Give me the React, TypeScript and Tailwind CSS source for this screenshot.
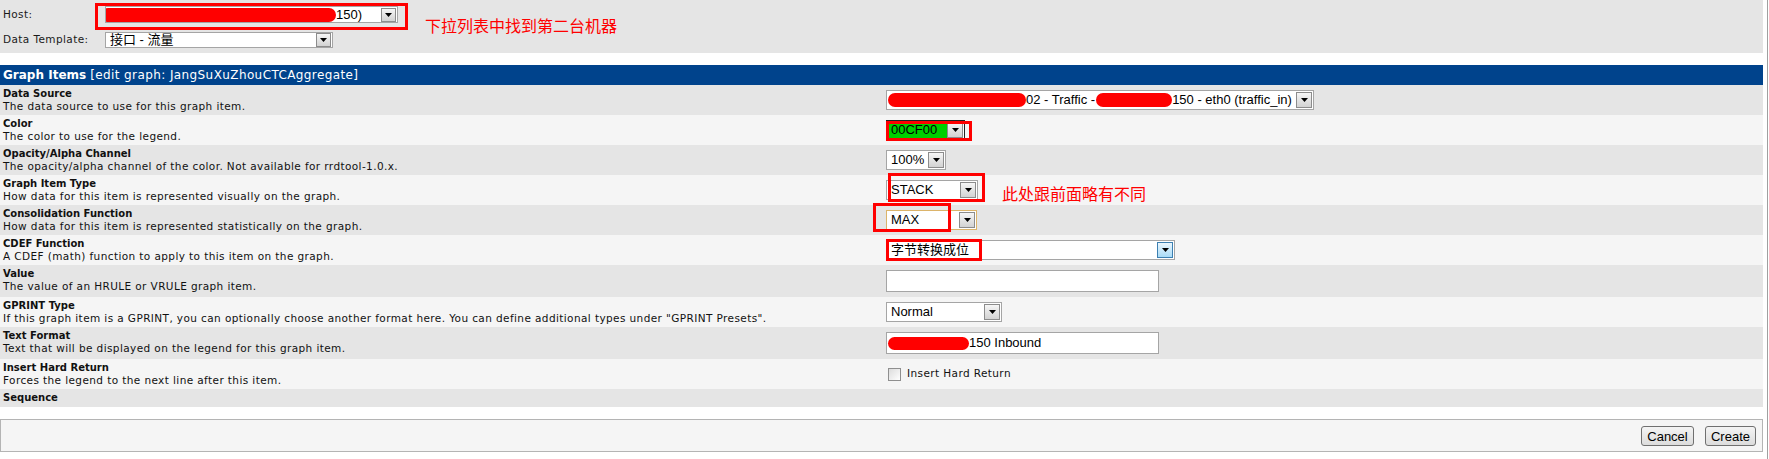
import type React from "react"

const verdana = "font-['DejaVu_Sans',Verdana,sans-serif]"
const arial = "font-['Liberation_Sans',Arial,'Noto_Sans_CJK_SC',sans-serif]"
const smallText = `${verdana} text-[10.5px] tracking-[0.4px]`

function Arrow({ blue = false, small = false }: { blue?: boolean; small?: boolean }) {
  return (
    <span
      className={`mr-[1px] flex shrink-0 items-center justify-center border ${small ? "h-[14px] w-[15px]" : "h-[16px] w-[16px]"} ${
        blue
          ? "border-[#3c7fb1] bg-linear-to-b from-[#eaf6fd] to-[#a9dbf6]"
          : "border-[#8c8c8c] bg-linear-to-b from-[#f6f6f6] to-[#d2d2d2]"
      }`}
    >
      <svg width="7" height="4" viewBox="0 0 7 4">
        <path d="M0 0h7L3.5 4z" fill="#000" />
      </svg>
    </span>
  )
}

interface SelectProps {
  size: string
  children: React.ReactNode
  border?: string
  bg?: string
  blue?: boolean
  small?: boolean
}

function Select({ size, children, border = "border-[#a5a5a5]", bg = "bg-white", blue, small }: SelectProps) {
  return (
    <div className={`flex items-center justify-between border ${border} bg-white ${size} ${arial} text-[13px] text-black`}>
      <div className={`flex h-full min-w-0 flex-1 items-center overflow-hidden whitespace-nowrap pl-[4px] ${bg}`}>{children}</div>
      <Arrow blue={blue} small={small} />
    </div>
  )
}

function Blob({ className }: { className: string }) {
  return <span className={`inline-block shrink-0 rounded-full bg-[#ff0000] ${className}`} />
}

interface Row {
  title: string
  desc?: string
  h: string
  control?: React.ReactNode
}

const rows: Row[] = [
  {
    title: "Data Source",
    desc: "The data source to use for this graph item.",
    h: "h-[30px]",
    control: (
      <Select size="w-[428px] h-[20px]">
        <Blob className="-ml-[3px] h-[14px] w-[138px]" />
        <span>02 - Traffic -</span>
        <Blob className="ml-[1px] h-[14px] w-[76px]" />
        <span>150 - eth0 (traffic_in)</span>
      </Select>
    ),
  },
  {
    title: "Color",
    desc: "The color to use for the legend.",
    h: "h-[30px]",
    control: (
      <Select size="w-[79px] h-[20px]" border="border-[#222]" bg="bg-[#00cf00]">
        00CF00
      </Select>
    ),
  },
  {
    title: "Opacity/Alpha Channel",
    desc: "The opacity/alpha channel of the color. Not available for rrdtool-1.0.x.",
    h: "h-[30px]",
    control: <Select size="w-[60px] h-[20px]">100%</Select>,
  },
  {
    title: "Graph Item Type",
    desc: "How data for this item is represented visually on the graph.",
    h: "h-[30px]",
    control: <Select size="w-[92px] h-[20px]">STACK</Select>,
  },
  {
    title: "Consolidation Function",
    desc: "How data for this item is represented statistically on the graph.",
    h: "h-[30px]",
    control: (
      <Select size="w-[91px] h-[20px]" border="border-[#dcb46a]">
        MAX
      </Select>
    ),
  },
  {
    title: "CDEF Function",
    desc: "A CDEF (math) function to apply to this item on the graph.",
    h: "h-[30px]",
    control: (
      <Select size="w-[289px] h-[20px]" blue>
        字节转换成位
      </Select>
    ),
  },
  {
    title: "Value",
    desc: "The value of an HRULE or VRULE graph item.",
    h: "h-[32px]",
    control: <div className="h-[22px] w-[273px] border border-[#a5a5a5] bg-white" />,
  },
  {
    title: "GPRINT Type",
    desc: 'If this graph item is a GPRINT, you can optionally choose another format here. You can define additional types under "GPRINT Presets".',
    h: "h-[30px]",
    control: <Select size="w-[116px] h-[20px]">Normal</Select>,
  },
  {
    title: "Text Format",
    desc: "Text that will be displayed on the legend for this graph item.",
    h: "h-[32px]",
    control: (
      <div className={`flex h-[22px] w-[273px] items-center overflow-hidden border border-[#a5a5a5] bg-white pl-[1px] ${arial} text-[13px] text-black`}>
        <Blob className="h-[13px] w-[81px]" />
        <span className="whitespace-nowrap">150 Inbound</span>
      </div>
    ),
  },
  {
    title: "Insert Hard Return",
    desc: "Forces the legend to the next line after this item.",
    h: "h-[30px]",
    control: (
      <label className={`flex items-center gap-[6px] pl-[2px] ${smallText} text-[#111]`}>
        <span className="h-[13px] w-[13px] border border-[#8f8f8f] bg-linear-to-br from-[#dcdcdc] to-white" />
        Insert Hard Return
      </label>
    ),
  },
  { title: "Sequence", h: "h-[18px]" },
]

export default function App() {
  return (
    <div className="relative flex h-[459px] w-[1769px] overflow-hidden bg-white">
      <div className="w-[1763px]">
        {/* host / template picker */}
        <div className={`h-[53px] bg-[#e5e5e5] pt-[6px] ${smallText} text-[#1a1a1a]`}>
          <div className="flex h-[17px] items-center">
            <span className="w-[105px] pl-[3px]">Host:</span>
            <Select size="w-[293px] h-[17px]" small>
              <Blob className="-ml-[9px] h-[14px] w-[235px]" />
              <span className="tracking-normal">150)</span>
            </Select>
          </div>
          <div className="mt-[9px] flex h-[16px] items-center">
            <span className="w-[105px] pl-[3px]">Data Template:</span>
            <Select size="w-[228px] h-[16px]" small>
              <span className="tracking-normal">接口 - 流量</span>
            </Select>
          </div>
        </div>

        <div className="mt-[12px]">
          <div className={`flex h-[20px] items-center bg-[#00438c] pl-[3px] ${verdana} text-[12px] text-white`}>
            <span className="font-bold">Graph Items</span>
            <span className="ml-[4px] tracking-[0.4px]">[edit graph: JangSuXuZhouCTCAggregate]</span>
          </div>
          {rows.map((row, i) => (
            <div
              key={row.title}
              className={`grid grid-cols-[883px_1fr] ${row.h} ${i % 2 === 0 ? "bg-[#e5e5e5]" : "bg-[#f5f5f5]"}`}
            >
              <div className="pl-[3px] pt-[3px] leading-[12px] text-[#111]">
                <div className={`${verdana} text-[10px] font-bold`}>{row.title}</div>
                {row.desc && <div className={`${smallText} whitespace-nowrap`}>{row.desc}</div>}
              </div>
              <div className="flex items-center pl-[3px]">{row.control}</div>
            </div>
          ))}
        </div>

        <div className="mt-[12px] flex h-[33px] items-center justify-end gap-[11px] border border-[#b4b4b4] bg-[#f5f5f5] pr-[6px]">
          <button className={`h-[20px] w-[53px] rounded-[3px] border border-[#707070] bg-linear-to-b from-[#f4f4f4] to-[#dcdcdc] ${arial} text-[13px] text-black`}>
            Cancel
          </button>
          <button className={`h-[20px] w-[51px] rounded-[3px] border border-[#707070] bg-linear-to-b from-[#f4f4f4] to-[#dcdcdc] ${arial} text-[13px] text-black`}>
            Create
          </button>
        </div>
      </div>
      <div className="ml-[4px] w-[1px] bg-[#a0a0a0]" />

      {/* red annotations drawn over the screenshot */}
      <div className="absolute left-[95px] top-[3px] h-[27px] w-[313px] border-[3px] border-[#ff0000]" />
      <div className="absolute left-[886px] top-[121px] h-[20px] w-[86px] border-[3px] border-[#ff0000]" />
      <div className="absolute left-[888px] top-[173px] h-[29px] w-[97px] border-[3px] border-[#ff0000]" />
      <div className="absolute left-[873px] top-[203px] h-[29px] w-[78px] border-[3px] border-[#ff0000]" />
      <div className="absolute left-[886px] top-[239px] h-[22px] w-[96px] border-[3px] border-[#ff0000]" />
      <div className="absolute left-[425px] top-[16px] font-['Noto_Sans_CJK_SC',sans-serif] text-[16px] leading-[18px] text-[#ff0000]">
        下拉列表中找到第二台机器
      </div>
      <div className="absolute left-[1002px] top-[184px] font-['Noto_Sans_CJK_SC',sans-serif] text-[16px] leading-[18px] text-[#ff0000]">
        此处跟前面略有不同
      </div>
    </div>
  )
}
